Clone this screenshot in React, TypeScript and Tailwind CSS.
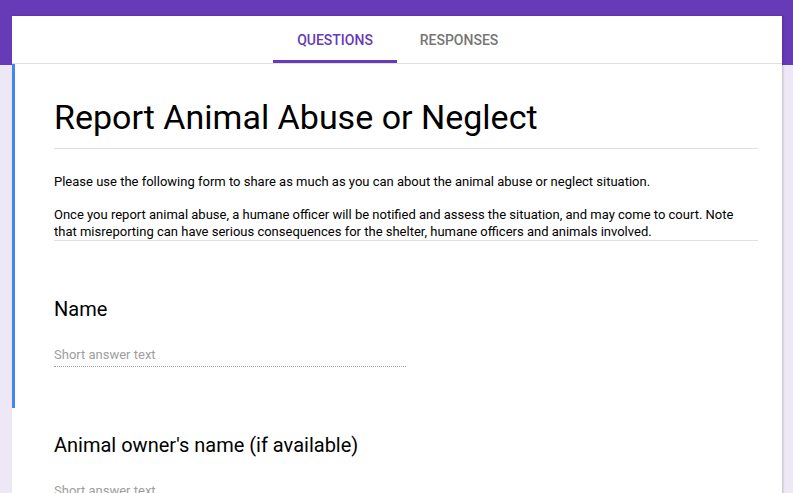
import React from 'react';

const tabs = [
    { label: 'QUESTIONS', active: true },
    { label: 'RESPONSES', active: false },
];

const ShortAnswer: React.FC = () => (
    <div className="w-[352px] border-b border-dotted border-[#9e9e9e] pb-[3px] text-[13px] leading-[17px] text-[#9e9e9e]">
        Short answer text
    </div>
);

const App: React.FC = () => (
    <div
        className="min-h-screen bg-[linear-gradient(#673ab7_0px,#673ab7_65px,#ede7f6_65px)] pt-4 pl-3 pr-[11px]"
        style={{ fontFamily: 'Roboto, "Noto Sans", sans-serif' }}
    >
        <div className="bg-white shadow-[1px_0_2px_rgba(0,0,0,0.2)]">
            {/* tab bar */}
            <div className="flex h-12 justify-center border-b border-[#e0e0e0]">
                {tabs.map(tab => (
                    <div
                        key={tab.label}
                        className={`flex w-[124px] items-center justify-center border-b-[3px] pt-[3px] text-sm font-medium ${
                            tab.active ? 'border-[#673ab7] text-[#673ab7]' : 'border-transparent text-[#757575]'
                        }`}
                    >
                        {tab.label}
                    </div>
                ))}
            </div>

            {/* header + first question (focused) */}
            <div className="border-l-[3px] border-[#4285f4] pl-[39px] pr-6 pt-[33px] pb-[41px]">
                <h1 className="border-b border-[#e0e0e0] pb-[11px] text-[34px] leading-[40px] text-black">
                    Report Animal Abuse or Neglect
                </h1>
                <div className="mt-6 border-b border-[#e0e0e0] text-[13px] leading-[17px] text-black">
                    <p>Please use the following form to share as much as you can about the animal abuse or neglect situation.</p>
                    <p className="mt-4">
                        Once you report animal abuse, a humane officer will be notified and assess the situation, and may come to court. Note
                        <br />
                        that misreporting can have serious consequences for the shelter, humane officers and animals involved.
                    </p>
                </div>
                <div className="mt-14">
                    <h2 className="text-xl leading-6 text-black">Name</h2>
                    <div className="mt-[25px]">
                        <ShortAnswer />
                    </div>
                </div>
            </div>

            {/* second question */}
            <div className="pl-[42px] pr-6 pt-[25px] pb-10">
                <h2 className="text-xl leading-6 text-black">Animal owner's name (if available)</h2>
                <div className="mt-[25px]">
                    <ShortAnswer />
                </div>
            </div>
        </div>
    </div>
);

export default App;
